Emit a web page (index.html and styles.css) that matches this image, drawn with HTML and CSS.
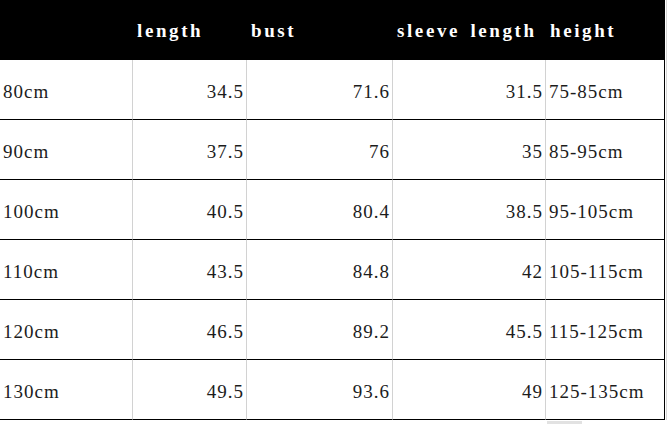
FILE: index.html
```html
<!DOCTYPE html>
<html>
<head>
<meta charset="utf-8">
<link rel="stylesheet" href="styles.css">
</head>
<body>
<div class="frame">
  <div class="chart">
    <div class="cell head"></div>
    <div class="cell head">length</div>
    <div class="cell head">bust</div>
    <div class="cell head">sleeve length</div>
    <div class="cell head">height</div>

    <div class="cell">80cm</div><div class="cell num">34.5</div><div class="cell num">71.6</div><div class="cell num">31.5</div><div class="cell last">75-85cm</div>
    <div class="cell">90cm</div><div class="cell num">37.5</div><div class="cell num">76</div><div class="cell num">35</div><div class="cell last">85-95cm</div>
    <div class="cell">100cm</div><div class="cell num">40.5</div><div class="cell num">80.4</div><div class="cell num">38.5</div><div class="cell last">95-105cm</div>
    <div class="cell">110cm</div><div class="cell num">43.5</div><div class="cell num">84.8</div><div class="cell num">42</div><div class="cell last">105-115cm</div>
    <div class="cell">120cm</div><div class="cell num">46.5</div><div class="cell num">89.2</div><div class="cell num">45.5</div><div class="cell last">115-125cm</div>
    <div class="cell">130cm</div><div class="cell num">49.5</div><div class="cell num">93.6</div><div class="cell num">49</div><div class="cell last">125-135cm</div>
  </div>
  <div class="edge"></div>
</div>
<div class="scroll"></div>
</body>
</html>
```
FILE: styles.css
```css
html, body {
  margin: 0;
  padding: 0;
  background: #fff;
}
body {
  width: 668px;
  height: 424px;
  overflow: hidden;
  font-family: "Liberation Serif", "DejaVu Serif", serif;
  font-size: 19px;
  color: #000;
}
.frame {
  display: flex;
}
.chart {
  display: grid;
  grid-template-columns: 133px 114px 146px 153px 119px;
  grid-auto-rows: 60px;
  width: 665px;
}
.edge {
  width: 1px;
  margin-left: 1px;
  background: #d6d6d6;
}
.cell {
  box-sizing: border-box;
  padding: 21px 3px 0 3px;
  line-height: 22px;
  letter-spacing: 1px;
  white-space: nowrap;
  border-right: 1px solid #d2d2d2;
  border-bottom: 1px solid #000;
  color: #1c1c1c;
}
.cell.num {
  text-align: right;
  padding-right: 2px;
}
.cell.last {
  border-right: 1px solid #000;
}
.cell.head {
  background: #000;
  color: #fff;
  font-weight: bold;
  letter-spacing: 2.6px;
  word-spacing: 3px;
  border-right: none;
  border-bottom: none;
  padding-top: 20px;
  padding-left: 4px;
}
.scroll {
  margin: 1px 0 0 547px;
  width: 35px;
  height: 4px;
  background: #e2e2e2;
}
```
